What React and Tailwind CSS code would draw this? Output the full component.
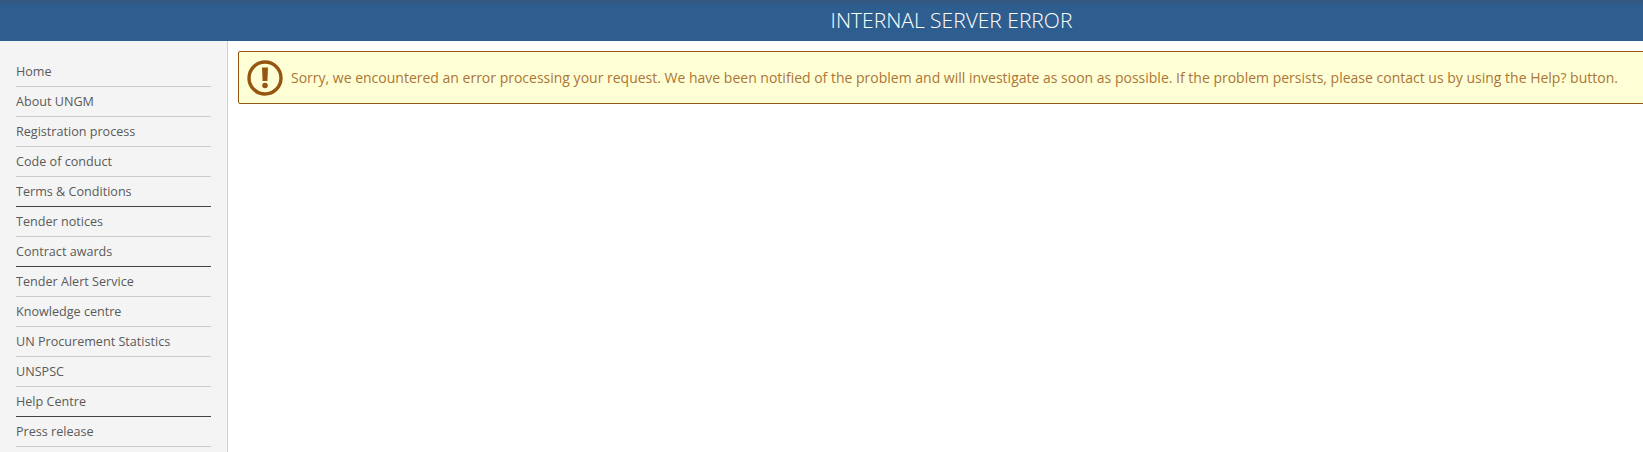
const links = [
  { label: "Home" },
  { label: "About UNGM" },
  { label: "Registration process" },
  { label: "Code of conduct" },
  { label: "Terms & Conditions", dark: true },
  { label: "Tender notices" },
  { label: "Contract awards", dark: true },
  { label: "Tender Alert Service" },
  { label: "Knowledge centre" },
  { label: "UN Procurement Statistics" },
  { label: "UNSPSC" },
  { label: "Help Centre", dark: true },
  { label: "Press release" },
];

function WarningIcon() {
  return (
    <svg width="36" height="36" viewBox="0 0 36 36" className="shrink-0">
      <circle cx="18" cy="18" r="16" fill="none" stroke="#96560f" strokeWidth="3.4" />
      <path d="M15 7.5h6l-.6 13.5h-4.8z" fill="#96560f" />
      <circle cx="18" cy="25.5" r="2.8" fill="#96560f" />
    </svg>
  );
}

export default function App() {
  return (
    <div className="h-[452px] overflow-hidden bg-white font-['Open_Sans',sans-serif]">
      <header className="flex h-[41px] items-center justify-center bg-gradient-to-b from-[#33577f] from-0% to-[#2e5e8f] to-15% pl-[260px] text-[21px] font-light text-white">
        INTERNAL SERVER ERROR
      </header>
      <div className="flex h-[411px]">
        <nav className="w-[228px] shrink-0 border-r border-[#d0d0d0] bg-[#f4f4f4] pt-4 pl-4 pr-[16px]">
          {links.map((link) => (
            <a
              key={link.label}
              href="#"
              className={`block h-[30px] border-b pt-[5px] text-[12.6px] leading-[20px] text-[#5a5a5a] ${link.dark ? "border-[#444]" : "border-[#ccc]"}`}
            >
              {link.label}
            </a>
          ))}
        </nav>
        <main className="min-w-0 flex-1 overflow-hidden pt-[10px] pl-[10px]">
          <div className="flex h-[53px] w-[1440px] items-center gap-[8px] rounded-[2px] border border-[#96560f] bg-[#ffffd6] pl-2 text-[14px] text-[#ab7536]">
            <WarningIcon />
            <span className="whitespace-nowrap">
              Sorry, we encountered an error processing your request. We have been notified of the problem and will investigate as soon as possible. If the problem persists, please contact us by using the Help? button.
            </span>
          </div>
        </main>
      </div>
    </div>
  );
}
